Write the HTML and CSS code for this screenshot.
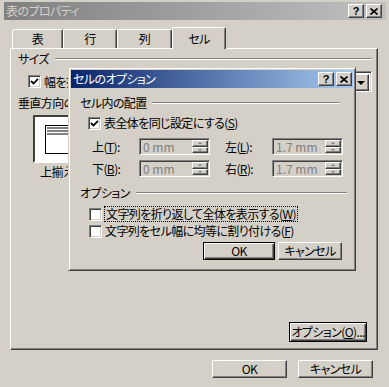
FILE: index.html
```html
<!DOCTYPE html>
<html lang="ja">
<head>
    <meta charset="UTF-8">
    <title>表のプロパティ</title>
    <link rel="stylesheet" href="styles.css">
</head>
<body>
    <div class="window">
        <div class="titlebar inactive">
            <span class="title-text">表のプロパティ</span>
            <div class="caption-btns">
                <span class="cap-btn">?</span>
                <span class="cap-btn"><svg width="8" height="7" viewBox="0 0 8 7"><path d="M0.5 0.5 L7.5 6.5 M7.5 0.5 L0.5 6.5" stroke="#000" stroke-width="1.6"/></svg></span>
            </div>
        </div>

        <div class="window-body">
            <div class="tabs">
                <div class="tab tab-1">表</div>
                <div class="tab tab-2">行</div>
                <div class="tab tab-3">列</div>
                <div class="tab active">セル</div>
            </div>

            <div class="panel">
                <div class="sep panel-sep"><span>サイズ</span><i class="sep-line"></i></div>
                <div class="size-row">
                    <div class="check size-check">
                        <span class="box"><svg width="9" height="9" viewBox="0 0 9 9"><path d="M1 4 L3.5 6.5 L8 1.8" stroke="#000" stroke-width="1.8" fill="none"/></svg></span>
                        <span class="clip-text">幅を指定する(<u>W</u>):</span>
                    </div>
                    <div class="combo"><span class="combo-btn"><i class="arrow-down"></i></span></div>
                </div>
                <div class="group-label">垂直方向の配置</div>
                <div class="valign">
                    <div class="preview">
                        <div class="preview-page"><i></i><i></i><i></i></div>
                    </div>
                    <div class="valign-text">上揃え(<u>P</u>)</div>
                </div>
                <div class="panel-foot">
                    <button class="btn default btn-options">オプション(<u>O</u>)...</button>
                </div>
            </div>

            <div class="footer">
                <button class="btn btn-main">OK</button>
                <button class="btn btn-main">キャンセル</button>
            </div>
        </div>
    </div>

    <!-- セルのオプション -->
    <div class="dialog">
        <div class="titlebar active">
            <span class="title-text">セルのオプション</span>
            <div class="caption-btns">
                <span class="cap-btn">?</span>
                <span class="cap-btn"><svg width="8" height="7" viewBox="0 0 8 7"><path d="M0.5 0.5 L7.5 6.5 M7.5 0.5 L0.5 6.5" stroke="#000" stroke-width="1.6"/></svg></span>
            </div>
        </div>

        <div class="dialog-body">
            <div class="sep dlg-sep1"><span>セル内の配置</span><i class="sep-line"></i></div>
            <div class="check dlg-check">
                <span class="box"><svg width="9" height="9" viewBox="0 0 9 9"><path d="M1 4 L3.5 6.5 L8 1.8" stroke="#000" stroke-width="1.8" fill="none"/></svg></span>
                <span>表全体を同じ設定にする(<u>S</u>)</span>
            </div>

            <div class="spin-row first">
                <span class="spin-label">上(<u>T</u>):</span>
                <div class="field"><span class="field-text">0 mm</span><span class="spinner"><span class="spin-btn"><i class="arrow-up"></i></span><span class="spin-btn"><i class="arrow-dn"></i></span></span></div>
                <span class="spin-label right-col">左(<u>L</u>):</span>
                <div class="field"><span class="field-text">1.7 mm</span><span class="spinner"><span class="spin-btn"><i class="arrow-up"></i></span><span class="spin-btn"><i class="arrow-dn"></i></span></span></div>
            </div>
            <div class="spin-row">
                <span class="spin-label">下(<u>B</u>):</span>
                <div class="field"><span class="field-text">0 mm</span><span class="spinner"><span class="spin-btn"><i class="arrow-up"></i></span><span class="spin-btn"><i class="arrow-dn"></i></span></span></div>
                <span class="spin-label right-col">右(<u>R</u>):</span>
                <div class="field"><span class="field-text">1.7 mm</span><span class="spinner"><span class="spin-btn"><i class="arrow-up"></i></span><span class="spin-btn"><i class="arrow-dn"></i></span></span></div>
            </div>

            <div class="sep dlg-sep2"><span>オプション</span><i class="sep-line"></i></div>
            <div class="check opt-check first">
                <span class="box"></span>
                <span class="focus">文字列を折り返して全体を表示する(<u>W</u>)</span>
            </div>
            <div class="check opt-check">
                <span class="box"></span>
                <span>文字列をセル幅に均等に割り付ける(<u>F</u>)</span>
            </div>

            <div class="dlg-buttons">
                <button class="btn default dlg-ok">OK</button>
                <button class="btn dlg-cancel">キャンセル</button>
            </div>
        </div>
    </div>
</body>
</html>
```

FILE: styles.css
```css
* { margin: 0; padding: 0; box-sizing: border-box; }
body { width: 389px; height: 387px; overflow: hidden; position: relative; background: #d4d0c8; color: #000; font-family: "MS UI Gothic", "Noto Sans CJK JP", sans-serif; font-size: 12px; line-height: 14px; letter-spacing: -0.6px; font-feature-settings: "palt"; white-space: nowrap; }
u { text-decoration: underline; text-underline-offset: 1px; }
button { font: inherit; color: inherit; letter-spacing: inherit; background: #d4d0c8; }

/* 3D frames */
.btn, .cap-btn, .combo-btn, .spin-btn { background: #d4d0c8; border: 1px solid; border-color: #fff #404040 #404040 #fff; box-shadow: inset -1px -1px #808080; }
.box, .field, .combo { border: 1px solid; border-color: #808080 #fff #fff #808080; box-shadow: inset 1px 1px #404040, inset -1px -1px #d4d0c8; }

.window { height: 387px; padding: 2px 3px 0 4px; }
.titlebar { height: 18px; display: flex; align-items: center; justify-content: space-between; padding: 0 4px 0 2px; }
.titlebar.inactive { background: linear-gradient(to right, #808080, #c0c0c0); color: #d4d0c8; }
.titlebar.active { background: linear-gradient(to right, #0a246a, #a6caf0); color: #fff; }
.caption-btns { display: flex; gap: 2px; }
.cap-btn { width: 16px; height: 14px; display: flex; align-items: center; justify-content: center; font-family: "Liberation Sans", sans-serif; font-weight: bold; font-size: 11px; line-height: 12px; letter-spacing: 0; color: #000; }

.window-body { padding: 7px 8px 0 6px; }
.tabs { display: flex; align-items: flex-end; height: 21px; padding-left: 2px; }
.tab { height: 19px; display: flex; align-items: center; justify-content: center; background: #d4d0c8; border: 1px solid; border-bottom: none; border-color: #fff #404040 transparent #fff; border-radius: 2px 2px 0 0; box-shadow: inset -1px 0 #808080; }
.tab-1 { width: 51px; }
.tab-2 { width: 54px; }
.tab-3 { width: 55px; }
.tab.active { width: 54px; height: 22px; margin-bottom: -1px; position: relative; z-index: 1; }

.panel { height: 302px; display: flex; flex-direction: column; padding-left: 7px; border: 1px solid; border-color: #fff #404040 #404040 #fff; box-shadow: inset -1px -1px #808080; }
.sep { display: flex; align-items: center; height: 14px; }
.sep-line { flex: 1; height: 2px; border-top: 1px solid #808080; border-bottom: 1px solid #fff; margin-left: 6px; }
.panel-sep { margin-top: 3px; margin-right: 5px; }
.size-row { display: flex; align-items: center; justify-content: space-between; height: 21px; margin-top: 5px; padding-left: 10px; padding-right: 5px; }
.check { display: flex; align-items: center; gap: 3px; height: 14px; }
.size-check { width: 40px; }
.clip-text { display: block; width: 24px; overflow: hidden; }
.box { flex: none; width: 13px; height: 13px; background: #fff; display: flex; align-items: center; justify-content: center; }
.combo { width: 92px; height: 21px; background: #fff; display: flex; justify-content: flex-end; padding: 2px; }
.combo-btn { width: 16px; height: 17px; display: flex; align-items: center; justify-content: center; }
.arrow-down { width: 0; height: 0; border-left: 4px solid transparent; border-right: 4px solid transparent; border-top: 4px solid #000; }
.group-label { width: 50px; height: 14px; margin-top: 4px; overflow: hidden; }
.valign { margin-top: 5px; padding-left: 15px; }
.preview { width: 35px; height: 48px; background: #fff; border: 2px solid; border-color: #404040 #fff #fff #404040; border-right: none; padding: 8px 0 0 10px; overflow: hidden; }
.preview-page { width: 40px; height: 29px; border: 1px solid #000; padding: 1px 0 0 1px; display: flex; flex-direction: column; gap: 1px; }
.preview-page i { display: block; width: 36px; height: 2px; background: #808080; }
.valign-text { width: 35px; height: 14px; margin-top: 2px; padding-left: 7px; overflow: hidden; }
.panel-foot { margin-top: auto; display: flex; justify-content: flex-end; padding: 0 10px 7px 0; }

.btn { height: 18px; display: flex; align-items: center; justify-content: center; }
.btn.default { border-color: #000; box-shadow: inset 1px 1px #fff, inset -1px -1px #404040, inset -2px -2px #808080; }
.btn-options { width: 78px; height: 20px; }
.footer { display: flex; justify-content: flex-end; gap: 11px; margin-top: 10px; padding-right: 5px; }
.btn-main { width: 75px; }

/* セルのオプション */
.dialog { position: absolute; left: 68px; top: 67px; z-index: 5; width: 288px; height: 204px; padding: 2px; background: #d4d0c8; border: 1px solid; border-color: #d4d0c8 #404040 #404040 #d4d0c8; box-shadow: inset 1px 1px #fff, inset -1px -1px #808080; }
.dialog .titlebar { padding: 0 1px 0 2px; }
.dialog-body { padding-left: 9px; }
.dlg-sep1 { margin-top: 8px; margin-right: 13px; }
.dlg-sep1 .sep-line { margin-left: 5px; }
.dlg-check { margin-top: 6px; padding-left: 8px; }
.spin-row { display: flex; align-items: center; height: 17px; margin-top: 5px; padding-left: 12px; }
.spin-row.first { margin-top: 8px; }
.spin-label { width: 47px; }
.right-col { margin-left: 15px; }
.field { width: 71px; height: 17px; display: flex; padding: 1px; color: #808080; }
.field-text { flex: 1; padding-left: 2px; line-height: 13px; letter-spacing: 0; }
.spinner { width: 16px; display: flex; flex-direction: column; }
.spin-btn { flex: 1; display: flex; align-items: center; justify-content: center; }
.arrow-up { width: 0; height: 0; border-left: 2px solid transparent; border-right: 2px solid transparent; border-bottom: 2px solid #808080; }
.arrow-dn { width: 0; height: 0; border-left: 2px solid transparent; border-right: 2px solid transparent; border-top: 2px solid #808080; }
.dlg-sep2 { margin-top: 9px; margin-right: 6px; }
.opt-check { margin-top: 3px; padding-left: 9px; }
.opt-check.first { margin-top: 7px; }
.focus { outline: 1px dotted #000; outline-offset: 0; padding: 0 1px; }
.dlg-buttons { display: flex; justify-content: flex-end; gap: 3px; margin-top: 4px; padding-right: 11px; }
.dlg-ok { width: 72px; }
.dlg-cancel { width: 64px; }
```
